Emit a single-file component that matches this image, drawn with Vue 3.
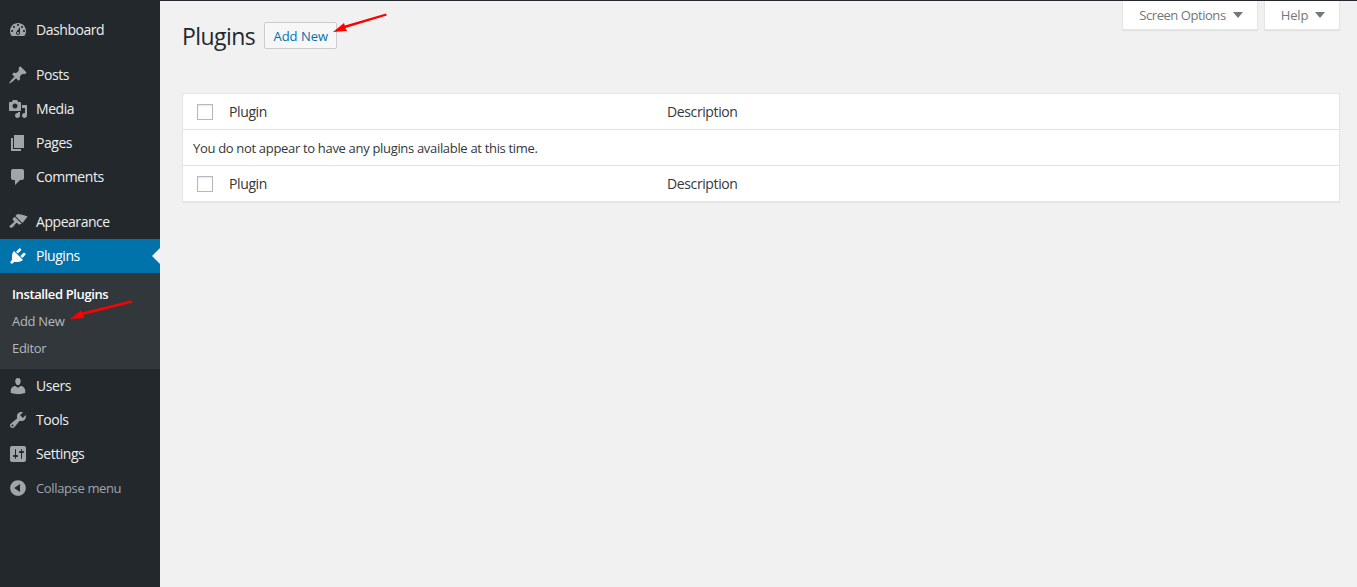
<script setup>
const top = [
  { label: 'Dashboard', group: 'a', d: 'M3.76 16h12.48c1.1-1.37 1.76-3.11 1.76-5 0-4.42-3.58-8-8-8s-8 3.58-8 8c0 1.89.66 3.63 1.76 5zM10 4c.55 0 1 .45 1 1s-.45 1-1 1-1-.45-1-1 .45-1 1-1zM6 6c.55 0 1 .45 1 1s-.45 1-1 1-1-.45-1-1 .45-1 1-1zm8 0c.55 0 1 .45 1 1s-.45 1-1 1-1-.45-1-1 .45-1 1-1zm-5.37 5.55L12 7v6c0 1.1-.9 2-2 2s-2-.9-2-2c0-.57.24-1.08.63-1.45zM4 10c.55 0 1 .45 1 1s-.45 1-1 1-1-.45-1-1 .45-1 1-1zm12 0c.55 0 1 .45 1 1s-.45 1-1 1-1-.45-1-1 .45-1 1-1zm-5 3c0-.55-.45-1-1-1s-1 .45-1 1 .45 1 1 1 1-.45 1-1z' },
  { sep: true },
  { label: 'Posts', d: 'M10.44 3.02l1.82-1.82 6.36 6.35-1.83 1.82c-1.05-.68-2.48-.57-3.41.36l-.75.75c-.92.93-1.04 2.35-.35 3.41l-1.83 1.82-2.41-2.41-2.8 2.79c-.42.42-3.38 2.71-3.8 2.29s1.86-3.39 2.28-3.81l2.79-2.79L4.1 9.36l1.83-1.82c1.05.69 2.48.57 3.4-.36l.75-.75c.93-.92 1.05-2.35.36-3.41z' },
  { label: 'Media', d: 'M13 11V4c0-.55-.45-1-1-1h-1.67L9 1H5L3.67 3H2c-.55 0-1 .45-1 1v7c0 .55.45 1 1 1h10c.55 0 1-.45 1-1zM7 4.5c1.38 0 2.5 1.12 2.5 2.5S8.38 9.5 7 9.5 4.5 8.38 4.5 7 5.62 4.5 7 4.5zM14 6h5v10.5c0 1.38-1.12 2.5-2.5 2.5S14 17.88 14 16.5s1.12-2.5 2.5-2.5c.17 0 .34.02.5.05V9h-3V6zm-4 8.05V13h2v3.5c0 1.38-1.12 2.5-2.5 2.5S7 17.88 7 16.5 8.12 14 9.5 14c.17 0 .34.02.5.05z' },
  { label: 'Pages', d: 'M6 15V2h10v13H6zm-1 1h8v2H3V5h2v11z' },
  { label: 'Comments', d: 'M5 2h9c1.1 0 2 .9 2 2v7c0 1.1-.9 2-2 2h-2l-5 5v-5H5c-1.1 0-2-.9-2-2V4c0-1.1.9-2 2-2z' },
  { sep: true },
  { label: 'Appearance', d: 'M14.48 11.06L7.41 3.99l2-2c2.5.2 6.5 1 10.2 2.6zm-.71.71L6.7 4.7 4.93 6.47c-.39.39-.39 1.02 0 1.41l1.06 1.06c.39.39.39 1.03 0 1.42-.6.6-1.43 1.11-2.21 1.69-.35.26-.7.53-1.01.84C1.43 13.23.99 14.3 2 15.3c1.01 1 2.07.56 3.42-.79.31-.31.58-.66.84-1.01.58-.78 1.09-1.61 1.69-2.21.39-.39 1.02-.39 1.41 0l1.06 1.06c.39.39 1.02.39 1.41 0z' },
  { label: 'Plugins', active: true, d: 'M13.11 4.36L9.87 7.6 8 5.73l3.24-3.24c.35-.34 1.05-.2 1.56.32.52.51.66 1.21.31 1.55zm-8 1.77l.91-1.12 9.01 9.01-1.19.84c-.71.71-2.63 1.16-3.82 1.16H6.14L4.9 17.26c-.59.59-1.54.59-2.12 0-.59-.58-.59-1.53 0-2.12l1.24-1.24v-3.88c0-1.13.4-3.19 1.09-3.89zm7.26 3.97l3.24-3.24c.34-.35 1.04-.21 1.55.31.52.51.66 1.21.31 1.55l-3.24 3.25z' },
]
const rest = [
  { label: 'Users', d: 'M10 9.25c-2.27 0-2.73-3.44-2.73-3.44C7 4.02 7.82 2 9.97 2c2.16 0 2.98 2.02 2.71 3.81 0 0-.41 3.44-2.68 3.44zm0 2.57L12.72 10c2.39 0 4.52 2.33 4.52 4.53v2.49s-3.65 1.13-7.24 1.13c-3.65 0-7.24-1.13-7.24-1.13v-2.49c0-2.25 1.94-4.48 4.47-4.48z' },
  { label: 'Tools', d: 'M16.68 9.77c-1.34 1.34-3.3 1.67-4.95.99l-5.41 6.52c-.99.99-2.59.99-3.58 0s-.99-2.59 0-3.57l6.52-5.42c-.68-1.65-.35-3.61.99-4.95 1.28-1.28 3.12-1.62 4.72-1.06l-2.89 2.89 2.82 2.82 2.86-2.87c.53 1.58.18 3.39-1.08 4.65zM3.81 16.21c.4.39 1.04.39 1.43 0 .4-.4.4-1.04 0-1.43-.39-.4-1.03-.4-1.43 0-.39.39-.39 1.03 0 1.43z' },
  { label: 'Settings', d: 'M18 16V4c0-1.1-.9-2-2-2H4c-1.1 0-2 .9-2 2v12c0 1.1.9 2 2 2h12c1.1 0 2-.9 2-2zM8 11h1c.55 0 1 .45 1 1s-.45 1-1 1H8v1.5c0 .28-.22.5-.5.5s-.5-.22-.5-.5V13H6c-.55 0-1-.45-1-1s.45-1 1-1h1V5.5c0-.28.22-.5.5-.5s.5.22.5.5V11zm5-2h-1c-.55 0-1-.45-1-1s.45-1 1-1h1V5.5c0-.28.22-.5.5-.5s.5.22.5.5V7h1c.55 0 1 .45 1 1s-.45 1-1 1h-1v5.5c0 .28-.22.5-.5.5s-.5-.22-.5-.5V9z' },
  { label: 'Collapse menu', muted: true, d: 'M10 2.16c4.33 0 7.84 3.51 7.84 7.84s-3.51 7.84-7.84 7.84S2.16 14.33 2.16 10 5.71 2.16 10 2.16zm2 11.72V6.12L6.18 9.97z' },
]
const sub = [
  { label: 'Installed Plugins', current: true },
  { label: 'Add New' },
  { label: 'Editor' },
]
</script>

<template>
  <div class="page">
    <aside class="sidebar">
      <nav class="menu">
        <template v-for="(item, i) in top" :key="i">
          <div v-if="item.sep" class="sep"></div>
          <a v-else class="item" :class="{ active: item.active }">
            <svg class="ico" viewBox="0 0 20 20"><path :d="item.d" /></svg>
            <span>{{ item.label }}</span>
          </a>
        </template>
        <div class="submenu">
          <a v-for="s in sub" :key="s.label" class="subitem" :class="{ current: s.current }">{{ s.label }}</a>
          <svg class="arrow arrow-side" width="70" height="26" viewBox="0 0 70 26">
            <polygon points="64.5,2.2 65,4.8 16,17 17,20 3,21 14,12.5 15,14.5" />
          </svg>
        </div>
        <a v-for="item in rest" :key="item.label" class="item" :class="{ muted: item.muted }">
          <svg class="ico" viewBox="0 0 20 20"><path :d="item.d" /></svg>
          <span>{{ item.label }}</span>
        </a>
      </nav>
    </aside>

    <main class="main">
      <header class="head">
        <div class="title-row">
          <h1>Plugins</h1>
          <a class="btn">Add New</a>
          <svg class="arrow arrow-top" width="60" height="26" viewBox="0 0 60 26">
            <polygon points="56,1.5 56.8,3.5 15.5,16 17,19 3,20 14,11 14.8,13.5" />
          </svg>
        </div>
        <div class="tabs">
          <button class="tab tab-screen">Screen Options<i class="tri"></i></button>
          <button class="tab tab-help">Help<i class="tri"></i></button>
        </div>
      </header>

      <section class="table">
        <div class="row">
          <span class="check"></span>
          <span class="col-plugin">Plugin</span>
          <span>Description</span>
        </div>
        <div class="row msg">You do not appear to have any plugins available at this time.</div>
        <div class="row">
          <span class="check"></span>
          <span class="col-plugin">Plugin</span>
          <span>Description</span>
        </div>
      </section>
    </main>
  </div>
</template>

<style>
html, body { margin: 0; background: #f1f1f1; }
</style>

<style scoped>
.page {
  display: flex;
  min-height: 586px;
  border-top: 1px solid #23282d;
  font-family: "Open Sans", "Noto Sans", sans-serif;
  font-size: 13px;
  letter-spacing: -0.32px;
  background: #f1f1f1;
  overflow: hidden;
}
.sidebar { width: 160px; flex: none; background: #23282d; }
.menu { padding-top: 12px; display: flex; flex-direction: column; }
.sep { height: 11px; }
.item {
  position: relative;
  display: flex;
  align-items: center;
  height: 34px;
  padding-left: 8px;
  color: #eee;
  font-size: 14px;
  letter-spacing: -0.45px;
}
.item span { padding-bottom: 2px; }
.item .ico { width: 20px; height: 20px; margin-right: 8px; fill: #a0a5aa; flex: none; }
.item.active { background: #0073aa; color: #fff; }
.item.active .ico { fill: #fff; }
.item.active::after {
  content: "";
  position: absolute;
  right: 0;
  top: 50%;
  margin-top: -8px;
  border: 8px solid transparent;
  border-right-color: #f1f1f1;
  border-left-width: 0;
}
.item.muted { color: #a0a5aa; font-size: 13px; letter-spacing: -0.36px; }
.item.muted span { padding-bottom: 0; }
.submenu {
  position: relative;
  display: flex;
  flex-direction: column;
  background: #32373c;
  padding: 8px 0 7px;
}
.subitem {
  height: 27px;
  line-height: 27px;
  padding-left: 12px;
  color: #b4b9be;
  font-size: 13px;
}
.subitem.current { color: #fff; font-weight: 600; letter-spacing: -0.38px; }
.arrow { position: absolute; fill: #f00; }
.arrow-side { left: 67px; top: 25px; }
.arrow-top { left: 148px; top: 11px; }
.main {
  flex: 1;
  min-width: 0;
  padding: 0 17px 0 22px;
}
.head { display: flex; justify-content: space-between; align-items: flex-start; height: 92px; }
.title-row { position: relative; display: flex; align-items: flex-start; padding-top: 21px; }
h1 {
  margin: 0 9px 0 0;
  font-size: 23px;
  font-weight: 400;
  color: #23282d;
  line-height: 29px;
  letter-spacing: -0.55px;
}
.btn {
  box-sizing: border-box;
  height: 27px;
  line-height: 26px;
  width: 73px;
  text-align: center;
  border: 1px solid #ccc;
  border-radius: 2px;
  background: #f7f7f7;
  color: #0073aa;
  font-size: 13px;
  font-weight: 500;
  letter-spacing: 0;
}
.tabs { display: flex; gap: 6px; }
.tab {
  box-sizing: border-box;
  height: 29px;
  border: 1px solid #e5e5e5;
  border-top: 0;
  background: #fff;
  box-shadow: 0 1px 1px rgba(0,0,0,.06);
  color: #72777c;
  font: inherit;
  letter-spacing: -0.45px;
  white-space: nowrap;
  padding: 0 0 0 2px;
  display: flex;
  align-items: center;
  justify-content: center;
  gap: 7px;
}
.tab-screen { width: 136px; }
.tab-help { width: 76px; letter-spacing: -0.15px; }
.tri {
  width: 0; height: 0;
  border: 5px solid transparent;
  border-top: 6px solid #72777c;
  border-bottom: 0;
  margin-top: -1px;
}
.table {
  border: 1px solid #e5e5e5;
  background: #fff;
  box-shadow: 0 1px 1px rgba(0,0,0,.04);
}
.row {
  display: flex;
  align-items: center;
  height: 35px;
  padding-left: 14px;
  color: #32373c;
  font-size: 14px;
  letter-spacing: -0.38px;
}
.msg {
  height: 35px;
  border-top: 1px solid #e1e1e1;
  border-bottom: 1px solid #e1e1e1;
  padding-left: 10px;
  font-size: 13px;
  letter-spacing: -0.32px;
}
.check {
  box-sizing: border-box;
  width: 16px;
  height: 16px;
  border: 1px solid #b4b9be;
  background: #fff;
  box-shadow: inset 0 1px 2px rgba(0,0,0,.1);
  margin-right: 16px;
}
.col-plugin { width: 438px; }
</style>
